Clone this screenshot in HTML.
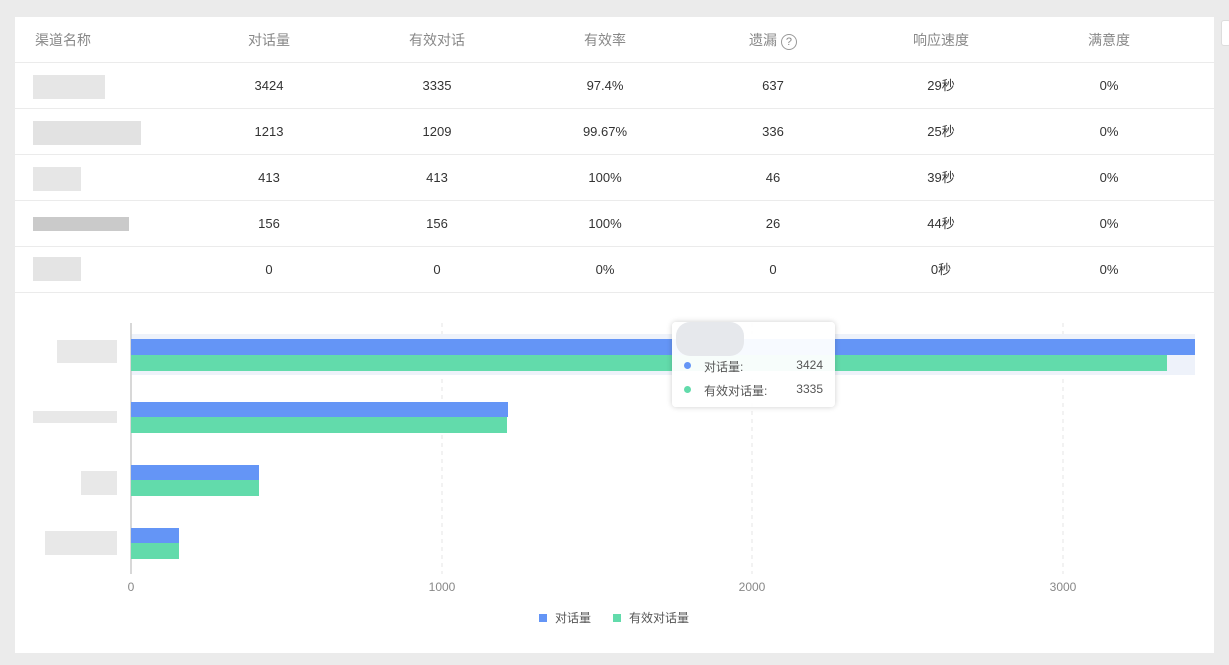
<!DOCTYPE html>
<html><head><meta charset="utf-8"><style>
*{margin:0;padding:0;box-sizing:border-box}
body{width:1229px;height:665px;background:#ebebeb;font-family:"Liberation Sans","Noto Sans CJK SC",sans-serif;position:relative;overflow:hidden}
.card{position:absolute;left:15px;top:17px;width:1199px;height:636px;background:#fff}
.row{position:absolute;left:0;width:1199px;height:46px;border-bottom:1px solid #ebebeb}
.c{position:absolute;top:0;height:46px;line-height:46px;font-size:13px;color:#333;text-align:center;width:168px}
.h .c{color:#888;font-size:14px}
.blk{position:absolute;background:#ddd}
.abs{position:absolute}
.ax{position:absolute;font-size:12px;color:#888;top:580px;width:60px;text-align:center}
</style></head><body>
<div class="abs" style="left:1221px;top:20px;width:10px;height:26px;background:#fff;border:1px solid #ddd;border-radius:3px"></div>
<div class="card">
<div class="row h" style="top:0;height:46px">
<div class="c" style="left:20px;text-align:left">渠道名称</div>
<div class="c" style="left:170px">对话量</div>
<div class="c" style="left:338px">有效对话</div>
<div class="c" style="left:506px">有效率</div>
<div class="c" style="left:674px">遗漏 <span style="display:inline-block;width:16px;height:16px;border:1px solid #999;border-radius:50%;font-size:11px;line-height:14px;vertical-align:0px">?</span></div>
<div class="c" style="left:842px">响应速度</div>
<div class="c" style="left:1010px">满意度</div>
</div>
<div class="row" style="top:46px"><div class="blk" style="left:18px;top:12px;width:72px;height:24px;background:#e6e6e6"></div>
<div class="c" style="left:170px">3424</div><div class="c" style="left:338px">3335</div><div class="c" style="left:506px">97.4%</div><div class="c" style="left:674px">637</div><div class="c" style="left:842px">29秒</div><div class="c" style="left:1010px">0%</div></div>
<div class="row" style="top:92px"><div class="blk" style="left:18px;top:12px;width:108px;height:24px;background:#e2e2e2"></div>
<div class="c" style="left:170px">1213</div><div class="c" style="left:338px">1209</div><div class="c" style="left:506px">99.67%</div><div class="c" style="left:674px">336</div><div class="c" style="left:842px">25秒</div><div class="c" style="left:1010px">0%</div></div>
<div class="row" style="top:138px"><div class="blk" style="left:18px;top:12px;width:48px;height:24px;background:#e6e6e6"></div>
<div class="c" style="left:170px">413</div><div class="c" style="left:338px">413</div><div class="c" style="left:506px">100%</div><div class="c" style="left:674px">46</div><div class="c" style="left:842px">39秒</div><div class="c" style="left:1010px">0%</div></div>
<div class="row" style="top:184px"><div class="blk" style="left:18px;top:16px;width:96px;height:14px;background:#cacaca"></div>
<div class="c" style="left:170px">156</div><div class="c" style="left:338px">156</div><div class="c" style="left:506px">100%</div><div class="c" style="left:674px">26</div><div class="c" style="left:842px">44秒</div><div class="c" style="left:1010px">0%</div></div>
<div class="row" style="top:230px"><div class="blk" style="left:18px;top:10px;width:48px;height:24px;background:#e4e4e4"></div>
<div class="c" style="left:170px">0</div><div class="c" style="left:338px">0</div><div class="c" style="left:506px">0%</div><div class="c" style="left:674px">0</div><div class="c" style="left:842px">0秒</div><div class="c" style="left:1010px">0%</div></div>
</div>
<svg class="abs" style="left:0;top:0" width="1229" height="665">
<g stroke="#e6e6e6" stroke-dasharray="4,4"><line x1="442" y1="323" x2="442" y2="574"/><line x1="752" y1="323" x2="752" y2="574"/><line x1="1063" y1="323" x2="1063" y2="574"/></g>
<rect x="131" y="334" width="1064" height="41" fill="#eef2fa"/>
<line x1="131" y1="323" x2="131" y2="574" stroke="#ccc" stroke-width="1.5"/>
<g fill="#6495f6"><rect x="131" y="339" width="1064" height="16"/><rect x="131" y="402" width="377" height="15"/><rect x="131" y="465" width="128" height="15"/><rect x="131" y="528" width="48" height="15"/></g>
<g fill="#62dbab"><rect x="131" y="355" width="1036" height="16"/><rect x="131" y="417" width="376" height="16"/><rect x="131" y="480" width="128" height="16"/><rect x="131" y="543" width="48" height="16"/></g>
<g fill="#e8e8e8"><rect x="57" y="340" width="60" height="23"/><rect x="33" y="411" width="84" height="12"/><rect x="81" y="471" width="36" height="24"/><rect x="45" y="531" width="72" height="24"/></g>
</svg>
<div class="ax" style="left:101px">0</div><div class="ax" style="left:412px">1000</div><div class="ax" style="left:722px">2000</div><div class="ax" style="left:1033px">3000</div>
<div class="abs" style="left:539px;top:611px;font-size:12px;color:#555;line-height:14px"><span style="display:inline-block;width:8px;height:8px;background:#6495f6;margin-right:8px"></span>对话量<span style="display:inline-block;width:8px;height:8px;background:#62dbab;margin:0 8px 0 22px"></span>有效对话量</div>
<div class="abs" style="left:672px;top:322px;width:163px;height:85px;background:rgba(255,255,255,.95);border-radius:4px;box-shadow:0 0 6px rgba(0,0,0,.2);font-size:12px;color:#555">
<div class="abs" style="left:4px;top:0;width:68px;height:34px;background:#e6e8ec;border-radius:14px"></div>
<div class="abs" style="left:12px;top:40px;width:7px;height:7px;border-radius:50%;background:#6495f6"></div><div class="abs" style="left:32px;top:36px">对话量:</div><div class="abs" style="right:12px;top:36px">3424</div>
<div class="abs" style="left:12px;top:64px;width:7px;height:7px;border-radius:50%;background:#62dbab"></div><div class="abs" style="left:32px;top:60px">有效对话量:</div><div class="abs" style="right:12px;top:60px">3335</div>
</div>
</body></html>
